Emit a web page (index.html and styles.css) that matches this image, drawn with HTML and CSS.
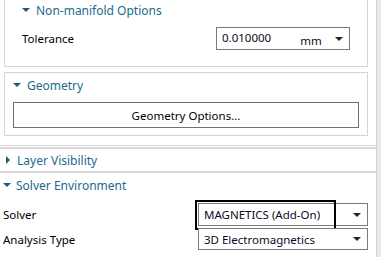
FILE: index.html
```html
<!DOCTYPE html>
<html lang="en">
<head>
  <meta charset="UTF-8" />
  <title>Properties</title>
  <link rel="stylesheet" href="styles.css">
</head>
<body>
  <div class="page">
    <div class="content">

      <div class="group">
        <div class="panel panel-top">
          <div class="header">
            <span class="tri-down"></span>
            <span class="header-text">Non-manifold Options</span>
          </div>
          <div class="row row-tol">
            <span class="label">Tolerance</span>
            <div class="combo combo-tol">
              <span class="value">0.010000</span>
              <span class="unit">mm</span>
              <span class="arrow"></span>
            </div>
          </div>
        </div>

        <div class="panel panel-geo">
          <div class="header">
            <span class="tri-down"></span>
            <span class="header-text">Geometry</span>
          </div>
          <div class="button">Geometry Options...</div>
        </div>
      </div>

      <div class="section section-collapsed">
        <div class="header">
          <span class="tri-right"></span>
          <span class="header-text">Layer Visibility</span>
        </div>
      </div>

      <div class="section section-solver">
        <div class="header">
          <span class="tri-down"></span>
          <span class="header-text">Solver Environment</span>
        </div>
        <div class="row row-solver">
          <span class="label">Solver</span>
          <div class="combo combo-wide">
            <span class="value">MAGNETICS (Add-On)</span>
            <span class="arrow"></span>
            <span class="focus"></span>
          </div>
        </div>
        <div class="row row-analysis">
          <span class="label">Analysis Type</span>
          <div class="combo combo-wide">
            <span class="value">3D Electromagnetics</span>
            <span class="arrow"></span>
          </div>
        </div>
      </div>

    </div>
    <div class="scrollbar"></div>
  </div>
</body>
</html>
```

FILE: styles.css
```css
* {
  box-sizing: border-box;
}
body {
  margin: 0;
  background: #fff;
  color: #000;
  font-family: 'Noto Sans', sans-serif;
  font-size: 11px;
  overflow: hidden;
}
.page {
  display: flex;
  width: 381px;
  height: 257px;
}
.content {
  width: 377px;
  display: flex;
  flex-direction: column;
  border-right: 1px solid #d4d4d4;
}
.scrollbar {
  width: 4px;
  background: #e8e8e8;
}

/* collapsible headers */
.header {
  display: flex;
  align-items: center;
  height: 22px;
  color: #1a6a8e;
  font-size: 12px;
}
.tri-down {
  width: 0;
  height: 0;
  border-left: 4px solid transparent;
  border-right: 4px solid transparent;
  border-top: 4px solid #1e5b7a;
  margin-right: 6px;
}
.tri-right {
  width: 0;
  height: 0;
  border-top: 4px solid transparent;
  border-bottom: 4px solid transparent;
  border-left: 4px solid #1e5b7a;
  margin-right: 7px;
}

/* nested group */
.group {
  padding: 0 8px 9px 4px;
  display: flex;
  flex-direction: column;
  gap: 5px;
  border-bottom: 1px solid #d4d4d4;
}
.panel {
  border: 1px solid #d4d4d4;
}
.panel-top {
  border-top: none;
  height: 67px;
  padding-left: 17px;
}
.panel-top .header {
  height: 20px;
}
.panel-geo {
  height: 64px;
  padding: 0 8px;
}
.panel-geo .header {
  height: 24px;
}

.row {
  display: flex;
  align-items: center;
  justify-content: space-between;
}
.row-tol {
  margin-top: 7px;
  padding-right: 17px;
}
.label {
  font-size: 11.5px;
}

.combo {
  position: relative;
  display: flex;
  align-items: center;
  height: 23px;
  border: 1px solid #7a7a7a;
  background: #fff;
  padding-left: 5px;
  font-size: 11.5px;
  color: #0a0a1e;
}
.combo-tol {
  width: 134px;
}
.combo-tol .value {
  margin-top: -3px;
}
.combo-tol .unit {
  margin-left: 29px;
  margin-top: 3px;
}
.arrow {
  position: absolute;
  right: 6px;
  top: 9px;
  width: 0;
  height: 0;
  border-left: 4px solid transparent;
  border-right: 4px solid transparent;
  border-top: 4px solid #222;
}

.button {
  margin-top: 5px;
  height: 26px;
  border: 1px solid #707070;
  display: flex;
  align-items: center;
  justify-content: center;
  font-size: 11.5px;
}

/* outer sections */
.section {
  border-top: 2px solid #d8d8d8;
}
.section-collapsed {
  margin-top: 1px;
  padding-left: 6px;
}
.section-solver {
  flex: 1;
  padding-left: 3px;
}
.section-collapsed .header {
  height: 22px;
}
.section-solver .header {
  height: 24px;
}
.section-solver .tri-down {
  margin-right: 5px;
}
.row-solver {
  margin-top: 6px;
  padding-right: 8px;
}
.row-analysis {
  margin-top: 2px;
  padding-right: 8px;
}
.combo-wide {
  width: 170px;
}
.row-analysis .combo-wide {
  height: 22px;
}
.row-analysis .arrow {
  top: 8px;
}
.focus {
  position: absolute;
  left: -4px;
  top: -4px;
  width: 141px;
  height: 30px;
  border: 2px solid #000;
}
```
